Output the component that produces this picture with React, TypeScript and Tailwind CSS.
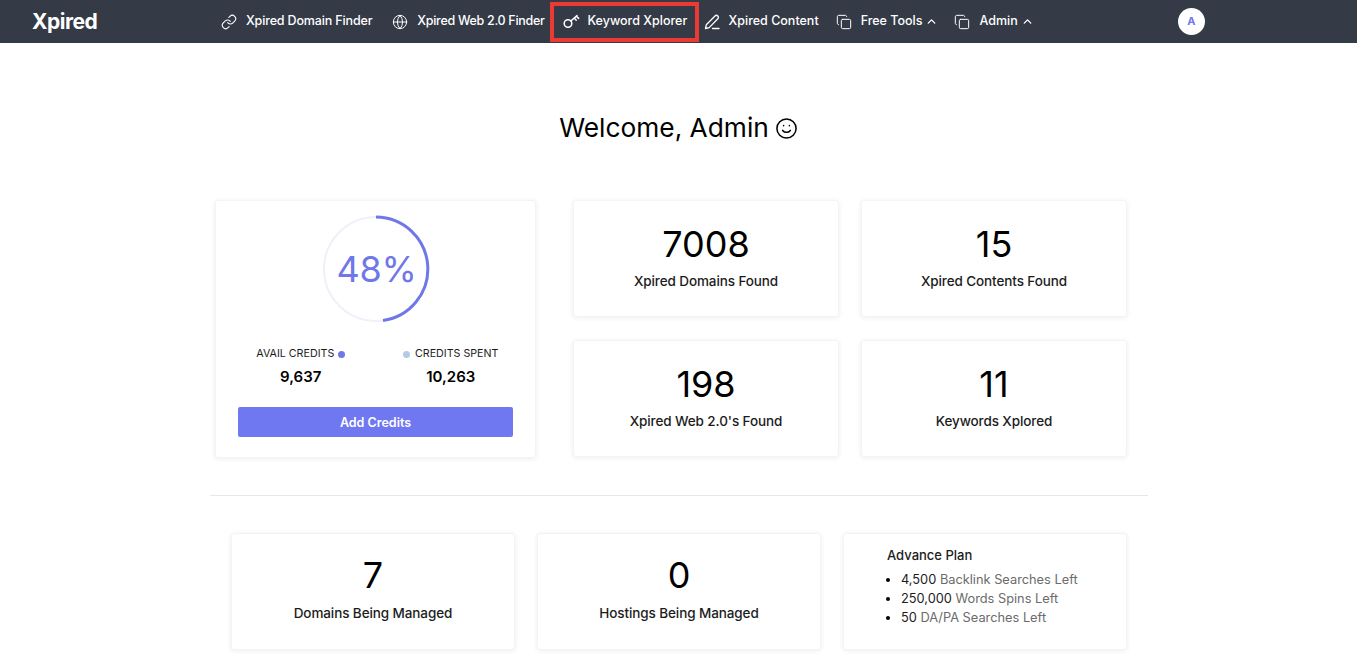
import { Link, Globe, Copy, ChevronUp, Smile } from 'lucide-react';

const font = { fontFamily: 'Inter, sans-serif' };

function KeyIcon() {
  return (
    <svg width="18" height="16" viewBox="0 0 18 16" fill="none" stroke="white" strokeWidth="1.5" strokeLinecap="round" strokeLinejoin="round">
      <circle cx="5" cy="10.5" r="3.8" />
      <path d="M7.8 8 L14 2.6 M11.2 5 L13.2 7.2 M13.4 3.2 L15.6 5.4" />
    </svg>
  );
}

function PenIcon() {
  return (
    <svg width="16" height="16" viewBox="0 0 16 16" fill="none" stroke="white" strokeWidth="1.3" strokeLinecap="round" strokeLinejoin="round">
      <path d="M1.5 14.5 L2.3 10.8 L11 2 C11.8 1.2 13 1.2 13.8 2 C14.6 2.8 14.6 4 13.8 4.8 L5.2 13.6 Z" />
      <path d="M8.5 14.5 H15" />
    </svg>
  );
}

function NavItem({ icon, label, caret, className }: { icon: React.ReactNode; label: string; caret?: boolean; className?: string }) {
  return (
    <div className={`flex items-center text-[12.5px] font-medium text-white whitespace-nowrap ${className ?? ''}`}>
      <span className="flex items-center w-[25px]">{icon}</span>
      <span>{label}</span>
      {caret && <ChevronUp size={13} strokeWidth={2.5} className="ml-[3px]" />}
    </div>
  );
}

function StatCard({ value, label, className, low }: { value: string; label: string; className?: string; low?: boolean }) {
  return (
    <div className={`bg-white rounded-[3px] border border-[#f3f4f6] shadow-[0_1px_5px_rgba(30,40,70,0.08)] flex flex-col items-center h-[117px] ${className ?? ''}`}>
      <div className={`text-[36px] leading-[44px] text-black ${low ? 'mt-[19px]' : 'mt-[21px]'}`}>{value}</div>
      <div className={`text-[13.5px] leading-[20px] font-medium text-[#1c1c1c] tracking-[-0.1px] ${low ? 'mt-[6px]' : 'mt-[5px]'}`}>{label}</div>
    </div>
  );
}

export default function App() {
  return (
    <div className="min-h-screen bg-white overflow-hidden" style={font}>
      <nav className="h-[43px] bg-[#343a46] flex items-center">
        <div className="w-[221px] pl-[32px] text-[21px] font-bold text-white tracking-[-0.5px]">Xpired</div>
        <NavItem className="tracking-[-0.15px] h-[43px]" icon={<Link size={16} color="white" strokeWidth={1.6} />} label="Xpired Domain Finder" />
        <NavItem className="ml-[20px] tracking-[-0.3px] h-[43px]" icon={<Globe size={16} color="white" strokeWidth={1.5} />} label="Xpired Web 2.0 Finder" />
        <NavItem className="ml-[5px] pl-[9px] pb-[2px] w-[149px] h-[40px] self-start mt-[2px] border-[4px] border-[#ea3a33] box-border shrink-0" icon={<KeyIcon />} label="Keyword Xplorer" />
        <NavItem className="ml-[5px] h-[43px]" icon={<PenIcon />} label="Xpired Content" />
        <NavItem className="ml-[17px] h-[43px]" icon={<Copy size={16} color="white" strokeWidth={1.5} />} label="Free Tools" caret />
        <NavItem className="ml-[16px] h-[43px]" icon={<Copy size={16} color="white" strokeWidth={1.5} />} label="Admin" caret />
        <div className="ml-[144px] w-[27px] h-[27px] rounded-full bg-white flex items-center justify-center text-[11px] font-bold text-[#6f78e8]">A</div>
      </nav>

      <h1 className="flex items-center justify-center gap-[6px] text-[26.3px] leading-[36px] text-black mt-[67px]">
        Welcome, Admin <Smile size={23} strokeWidth={1.6} />
      </h1>

      <main className="w-[938px] ml-[210px] mt-[54px]">
        <div className="flex">
          <div className="ml-[5px] w-[321px] h-[258px] bg-white rounded-[3px] border border-[#f3f4f6] shadow-[0_1px_5px_rgba(30,40,70,0.08)] flex flex-col items-center">
            <div className="relative w-[108px] h-[108px] mt-[14px]">
              <svg width="108" height="108" viewBox="0 0 108 108">
                <circle cx="54" cy="54" r="52" fill="none" stroke="#eef1f8" strokeWidth="2" />
                <path d="M54 2 A52 52 0 0 1 61 105.5" fill="none" stroke="#6f78e8" strokeWidth="3" />
              </svg>
              <div className="absolute inset-0 pl-[2px] flex items-center justify-center text-[36px] font-normal tracking-[-0.3px] text-[#6f78e8]">48%</div>
            </div>
            <div className="flex w-full mt-[23px] text-[10.7px] text-[#1c1c1c]">
              <div className="w-1/2 flex flex-col items-center pl-[10px]">
                <div className="flex items-center gap-[4px] leading-[16px]">AVAIL CREDITS <span className="w-[7px] h-[7px] rounded-full bg-[#6f78e8]" /></div>
                <div className="text-[15px] font-semibold text-black mt-[5px] leading-[20px]">9,637</div>
              </div>
              <div className="w-1/2 flex flex-col items-center pr-[9px]">
                <div className="flex items-center gap-[5px] leading-[16px]"><span className="w-[7px] h-[7px] rounded-full bg-[#b4cbe6]" /> CREDITS SPENT</div>
                <div className="text-[15px] font-semibold text-black mt-[5px] leading-[20px]">10,263</div>
              </div>
            </div>
            <button className="w-[275px] h-[30px] mt-[20px] pt-[2px] rounded-[2px] bg-[#6f78f0] text-white text-[12.5px] font-semibold">Add Credits</button>
          </div>
          <div className="ml-[37px] grid grid-cols-[266px_266px] auto-rows-[117px] gap-x-[22px] gap-y-[23px]">
            <StatCard value="7008" label="Xpired Domains Found" />
            <StatCard value="15" label="Xpired Contents Found" />
            <StatCard value="198" label="Xpired Web 2.0's Found" />
            <StatCard value="11" label="Keywords Xplored" />
          </div>
        </div>

        <hr className="border-[#e5e7eb] mt-[37px]" />

        <div className="flex gap-[22px] ml-[21px] mt-[37px]">
          <StatCard low className="w-[284px]" value="7" label="Domains Being Managed" />
          <StatCard low className="w-[284px]" value="0" label="Hostings Being Managed" />
          <div className="w-[284px] h-[117px] bg-white rounded-[3px] border border-[#f3f4f6] shadow-[0_1px_5px_rgba(30,40,70,0.08)] pl-[43px] pt-[11px]">
            <div className="text-[13px] leading-[20px] font-medium text-[#1c1c1c]">Advance Plan</div>
            <ul className="list-disc pl-[14px] mt-[5px] text-[12.8px] leading-[19px] text-[#6b6b6b]">
              <li className="marker:text-black"><span className="text-[#1c1c1c]">4,500</span> Backlink Searches Left</li>
              <li className="marker:text-black"><span className="text-[#1c1c1c]">250,000</span> Words Spins Left</li>
              <li className="marker:text-black"><span className="text-[#1c1c1c]">50</span> DA/PA Searches Left</li>
            </ul>
          </div>
        </div>
      </main>
    </div>
  );
}
